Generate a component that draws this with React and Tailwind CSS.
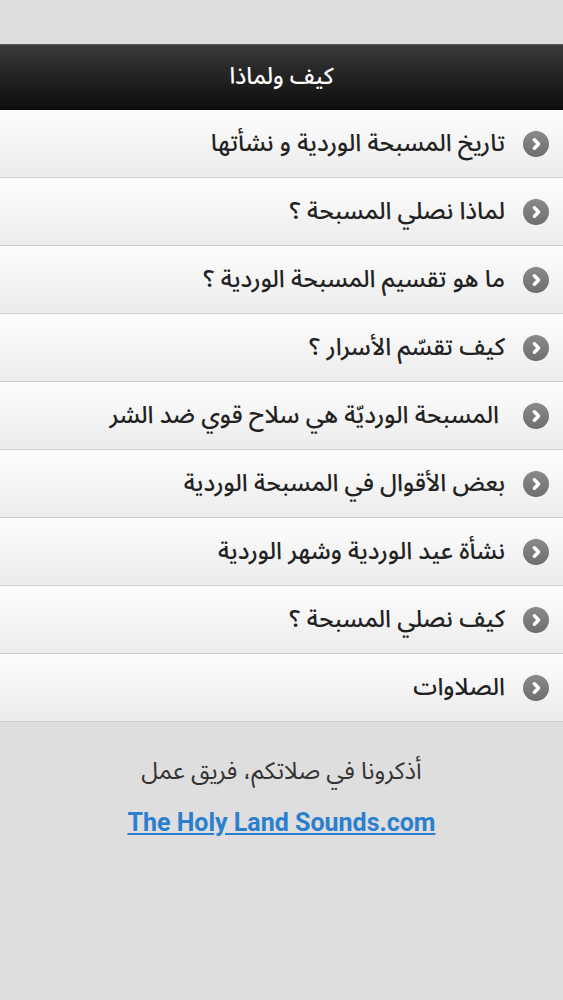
import React from 'react';

const items = [
  'تاريخ المسبحة الوردية و نشأتها',
  'لماذا نصلي المسبحة ؟',
  'ما هو تقسيم المسبحة الوردية ؟',
  'كيف تقسّم الأسرار ؟',
  'المسبحة الورديّة هي سلاح قوي ضد الشر',
  'بعض الأقوال في المسبحة الوردية',
  'نشأة عيد الوردية وشهر الوردية',
  'كيف نصلي المسبحة ؟',
  'الصلاوات',
];

function Chevron() {
  return (
    <span className="flex h-[26px] w-[26px] shrink-0 items-center justify-center rounded-full bg-gradient-to-b from-[#8a8a8a] to-[#6e6e6e]">
      <svg width="14" height="14" viewBox="0 0 12 12">
        <path d="M4.6 2.4 8.2 6 4.6 9.6" fill="none" stroke="#fff" strokeWidth="3" strokeLinecap="round" strokeLinejoin="round" />
      </svg>
    </span>
  );
}

export default function App() {
  return (
    <div className="min-h-[1000px] bg-[#dedede] pt-[44px]" style={{ fontFamily: '"Noto Sans Arabic", "Noto Naskh Arabic", "DejaVu Sans", sans-serif' }}>
      <header className="flex h-[66px] items-center justify-center border-t border-[#555] bg-gradient-to-b from-[#3a3a3a] to-[#0d0d0d]">
        <h1 dir="rtl" className="text-[23px] font-medium text-white">كيف ولماذا</h1>
      </header>

      <ul dir="rtl">
        {items.map((item, i) => (
          <li
            key={i}
            className="flex h-[68px] items-center gap-[18px] border-b border-[#cfcfcf] bg-gradient-to-b from-[#fdfdfd] to-[#ececec] pr-[14px]"
          >
            <Chevron />
            <span className={`text-[24px] font-medium text-[#222] ${i === 4 ? 'pr-[6px]' : ''}`}>{item}</span>
          </li>
        ))}
      </ul>

      <div className="flex flex-col items-center pt-[32px]">
        <p dir="rtl" className="text-[24px] text-[#333]">أذكرونا في صلاتكم، فريق عمل</p>
        <a href="#" className="mt-[14px] text-[25px] font-bold text-[#2a7fcf] underline" style={{ fontFamily: 'Roboto, sans-serif' }}>
          The Holy Land Sounds.com
        </a>
      </div>
    </div>
  );
}
